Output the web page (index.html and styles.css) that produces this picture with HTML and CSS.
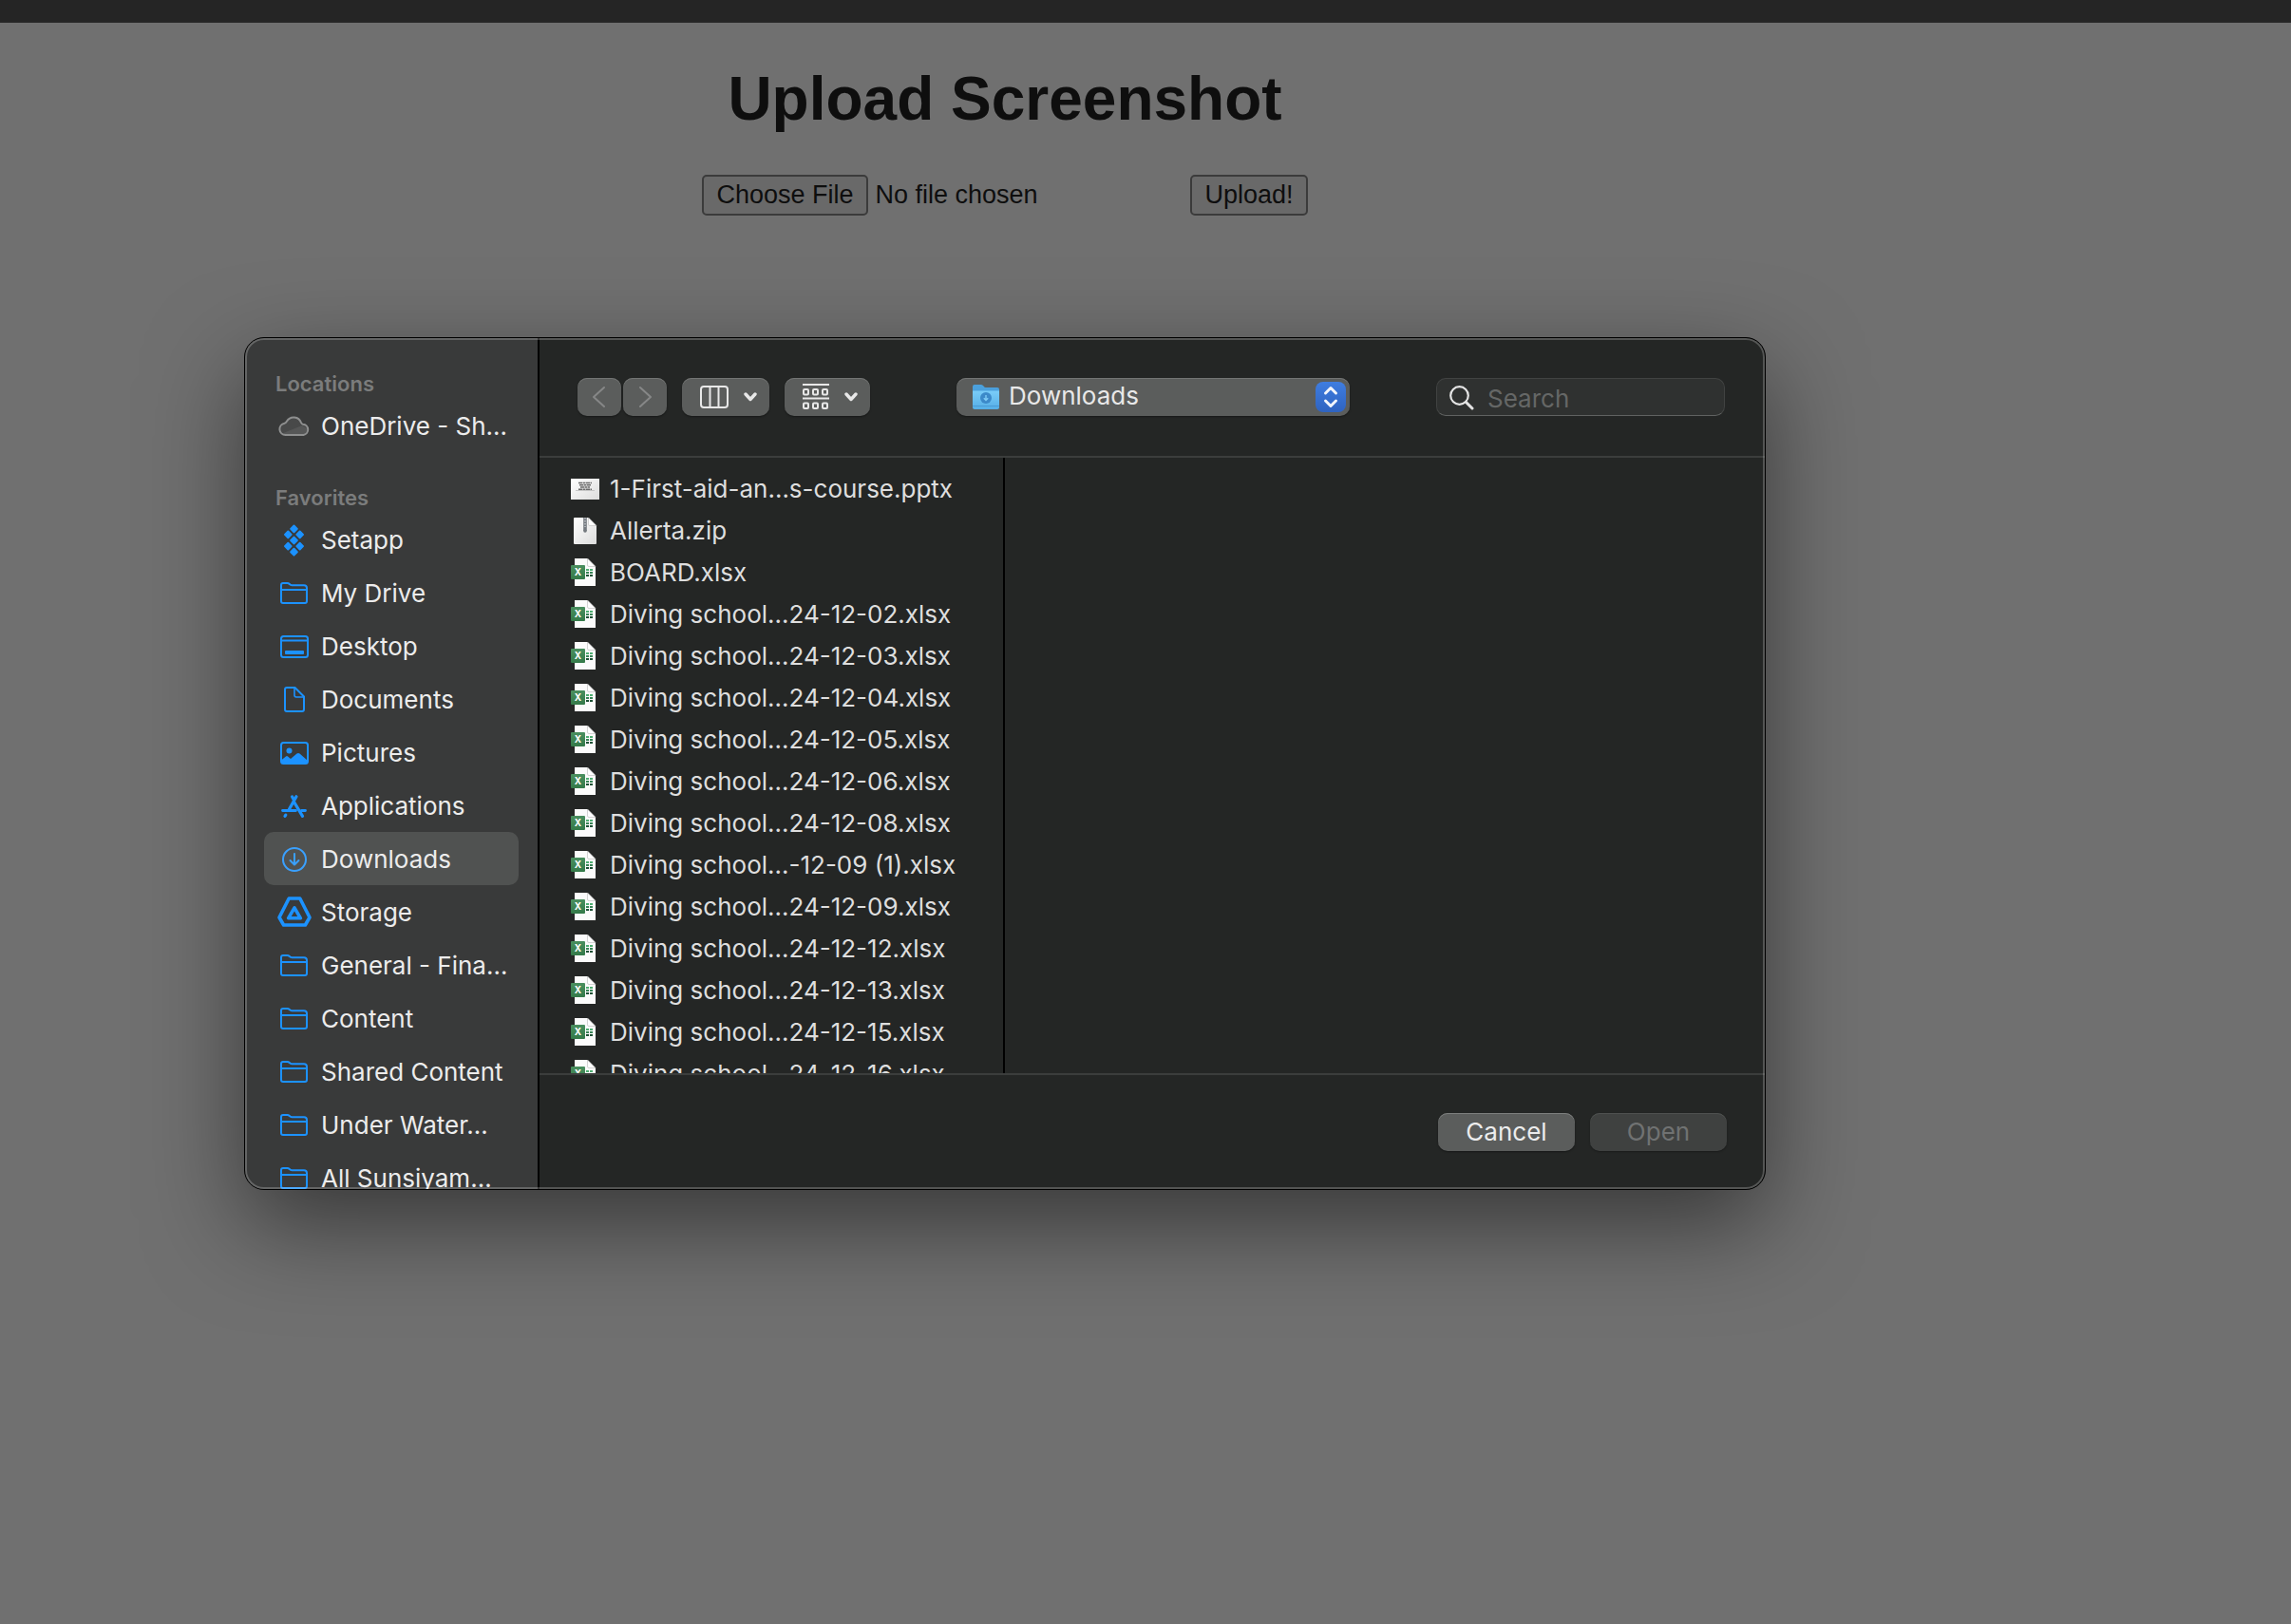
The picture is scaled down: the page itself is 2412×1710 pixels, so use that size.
FILE: index.html
```html
<!DOCTYPE html>
<html lang="en">
<head>
<meta charset="utf-8">
<title>Upload Screenshot</title>
<link rel="stylesheet" href="styles.css">
</head>
<body>
<svg class="sprite" aria-hidden="true">
  <defs>
    <linearGradient id="page-fill" x1="0" y1="0" x2="1" y2="1"><stop offset="0" stop-color="#fff"/><stop offset="1" stop-color="#dcdcdc"/></linearGradient>
    <linearGradient id="folder-fill" x1="0" y1="0" x2="0" y2="1"><stop offset="0" stop-color="#7accf8"/><stop offset="1" stop-color="#55aee6"/></linearGradient>
    <linearGradient id="excel-fill" x1="0" y1="0" x2="0" y2="1"><stop offset="0" stop-color="#4a8f5f"/><stop offset="1" stop-color="#347a49"/></linearGradient>
  </defs>
  <symbol id="folder" viewBox="0 0 36 36"><path d="M5 27V10a2 2 0 0 1 2-2h4.500c1 0 1.600.3 2.300 1 .8.800 1.400 1.200 2.500 1.200H29a3 3 0 0 1 3 3V27a2 2 0 0 1-2 2H7a2 2 0 0 1-2-2zM5 15h27" fill="none" stroke="currentColor" stroke-width="2"/></symbol>
  <symbol id="cloud" viewBox="0 0 36 36"><path d="M9.500 28a6.200 6.200 0 0 1-1-12.300c1.500-.3 1.700-.7 2.500-2.200a8.300 8.300 0 0 1 15 1.500c.4 1.200.8 1.500 2 1.700A5.700 5.700 0 0 1 28.500 28z" fill="#484949"/><path d="M5 27l22-9 7 4-4 6H9z" fill="#565757"/><path d="M9.500 28a6.200 6.200 0 0 1-1-12.300c1.500-.3 1.700-.7 2.500-2.200a8.300 8.300 0 0 1 15 1.500c.4 1.200.8 1.500 2 1.700A5.700 5.700 0 0 1 28.500 28z" fill="none" stroke="#8e8f8f" stroke-width="2"/></symbol>
  <symbol id="setapp" viewBox="0 0 36 36"><g fill="currentColor" stroke="currentColor" stroke-width="2" stroke-linejoin="round"><path d="M18.500 3.500l3.300 3.400-3.300 3.400-3.300-3.400zM12.300 9.500l3.300 3.400-3.300 3.400L9 12.900zM24.700 9.500l3.300 3.400-3.300 3.400-3.300-3.400zM18.500 15.600l3.300 3.400-3.300 3.400-3.300-3.400zM12.300 21.700l3.300 3.400-3.300 3.400L9 25.100zM24.700 21.700l3.300 3.400-3.300 3.400-3.300-3.400zM18.500 27.800l3.300 3.400-3.300 3.400-3.300-3.400z"/></g></symbol>
  <symbol id="desktop" viewBox="0 0 36 36"><rect x="5" y="8" width="28" height="22" rx="2.500" fill="none" stroke="currentColor" stroke-width="2"/><path d="M5 12.500h28" stroke="currentColor" stroke-width="2"/><rect x="9" y="23" width="20" height="4" rx="1" fill="currentColor"/></symbol>
  <symbol id="document" viewBox="0 0 36 36"><path d="M11 6h8.500L29 15.500V29a2 2 0 0 1-2 2H11a2 2 0 0 1-2-2V8a2 2 0 0 1 2-2z" fill="none" stroke="currentColor" stroke-width="2"/><path d="M19 6v8a2 2 0 0 0 2 2h8" fill="none" stroke="currentColor" stroke-width="1.600"/></symbol>
  <symbol id="picture" viewBox="0 0 36 36"><rect x="5" y="8" width="28" height="22" rx="2.500" fill="none" stroke="currentColor" stroke-width="2"/><circle cx="13.500" cy="16.500" r="3" fill="currentColor"/><path d="M5 26.500l5-4q1-.8 2 0l3 2.500 6.500-5.500q1.500-1.200 3 0L33 27v3H5z" fill="currentColor"/></symbol>
  <symbol id="apps" viewBox="0 0 36 36"><g fill="none" stroke="currentColor" stroke-width="3.200" stroke-linecap="round"><path d="M21 8.800L13.500 22M16.500 8.800l1.600 3M18.600 14.500L27.500 29.400M9 29.400l.8-1.200"/><path d="M6.500 23.500h14M26.500 23.500h4" stroke-width="2.800"/></g></symbol>
  <symbol id="download" viewBox="0 0 36 36"><g fill="none" stroke="currentColor" stroke-width="2" stroke-linecap="round" stroke-linejoin="round"><circle cx="19" cy="19" r="12"/><path d="M19 13v11M14.500 20l4.500 4.500 4.500-4.500"/></g></symbol>
  <symbol id="storage" viewBox="0 0 36 36"><g fill="none" stroke="currentColor" stroke-width="3.600" stroke-linejoin="round"><path d="M13.200 4h11.600L35 24l-4.600 8H7.600L3 24z"/><path d="M19 13.800l6.400 11H12.600z"/></g></symbol>
  <symbol id="chevron" viewBox="0 0 14 10"><path d="M2 2l5 5.500L12 2" fill="none" stroke="#e8e8e8" stroke-width="3.400" stroke-linecap="round" stroke-linejoin="round"/></symbol>
  <symbol id="zip" viewBox="0 0 32 32"><path d="M5 3h14l9 9v18q0 1-1 1H5q-1 0-1-1V4q0-1 1-1z" fill="url(#page-fill)"/><path d="M19.500 3L28 11.500h-7q-1.500 0-1.500-1.500z" fill="#fff" stroke="#bbb" stroke-width=".6"/><path d="M16 3v14" stroke="#74797f" stroke-width="3.600"/><path d="M16 3v10" stroke="#c4c8cc" stroke-width="1.400" stroke-dasharray="1.500 1.500"/><circle cx="16" cy="17" r="1.800" fill="#74797f"/></symbol>
  <symbol id="xlsx" viewBox="0 0 32 32"><path d="M5 2h13l9 9v20H5z" fill="#fbfbfb"/><path d="M18.500 2l8.500 8.500h-7q-1.500 0-1.500-1.500z" fill="#fff" stroke="#c2c2c2" stroke-width=".7"/><path d="M17 14h3M21 14h3" stroke="#4fae72" stroke-width="2"/><path d="M17 17h3M21 17h3" stroke="#378456" stroke-width="2"/><path d="M17 20h3M21 20h3" stroke="#1f5136" stroke-width="2"/><rect x="1" y="9" width="15" height="15" rx="1" fill="url(#excel-fill)"/><text x="8.500" y="20" font-family="Inter, sans-serif" font-size="10" font-weight="700" text-anchor="middle" fill="#fff">X</text></symbol>
</svg>

<header class="topbar"></header>
<main class="page">
  <h1 class="title">Upload Screenshot</h1>
  <form class="upload">
    <input class="upload-file" type="file" aria-label="Screenshot file">
    <button class="upload-submit" type="button">Upload!</button>
  </form>

  <section class="picker" role="dialog" aria-label="Choose a file">
    <nav class="sidebar" aria-label="Places">
      <h2 class="group">Locations</h2>
      <ul class="places">
        <li><a class="place" href="#"><svg><use href="#cloud"/></svg>OneDrive - Sh…</a></li>
      </ul>
      <h2 class="group">Favorites</h2>
      <ul class="places">
        <li><a class="place" href="#"><svg><use href="#setapp"/></svg>Setapp</a></li>
        <li><a class="place" href="#"><svg><use href="#folder"/></svg>My Drive</a></li>
        <li><a class="place" href="#"><svg><use href="#desktop"/></svg>Desktop</a></li>
        <li><a class="place" href="#"><svg><use href="#document"/></svg>Documents</a></li>
        <li><a class="place" href="#"><svg><use href="#picture"/></svg>Pictures</a></li>
        <li><a class="place" href="#"><svg><use href="#apps"/></svg>Applications</a></li>
        <li><a class="place current" href="#" aria-current="true"><svg><use href="#download"/></svg>Downloads</a></li>
        <li><a class="place" href="#"><svg><use class="wide" href="#storage"/></svg>Storage</a></li>
        <li><a class="place" href="#"><svg><use href="#folder"/></svg>General - Fina…</a></li>
        <li><a class="place" href="#"><svg><use href="#folder"/></svg>Content</a></li>
        <li><a class="place" href="#"><svg><use href="#folder"/></svg>Shared Content</a></li>
        <li><a class="place" href="#"><svg><use href="#folder"/></svg>Under Water…</a></li>
        <li><a class="place" href="#"><svg><use href="#folder"/></svg>All Sunsiyam…</a></li>
      </ul>
    </nav>

    <div class="browser">
      <div class="toolbar">
        <div class="tools">
          <div class="history">
            <button class="tool nav" type="button" aria-label="Back"><svg width="14" height="24" viewBox="0 0 14 24"><path d="M12 2L1 12l11 10" fill="none" stroke="currentColor" stroke-width="2" stroke-linecap="round" stroke-linejoin="round"/></svg></button>
            <button class="tool nav" type="button" aria-label="Forward"><svg width="14" height="24" viewBox="0 0 14 24"><path d="M2 2l11 10L2 22" fill="none" stroke="currentColor" stroke-width="2" stroke-linecap="round" stroke-linejoin="round"/></svg></button>
          </div>
          <button class="tool menu" type="button" aria-label="Column view"><svg width="30" height="24" viewBox="0 0 30 24"><rect x="1" y="1" width="28" height="22" rx="3" fill="none" stroke="#e8e8e8" stroke-width="2"/><path d="M10.500 1v22M19.500 1v22" stroke="#e8e8e8" stroke-width="2"/></svg><svg class="arrow"><use href="#chevron"/></svg></button>
          <button class="tool menu" type="button" aria-label="Group items"><svg width="28" height="28" viewBox="0 0 28 28"><g fill="none" stroke="#e8e8e8" stroke-width="2"><path d="M0 1h28M0 15.500h28"/><rect x="1" y="6" width="5" height="5.500" rx="1"/><rect x="11" y="6" width="5" height="5.500" rx="1"/><rect x="21" y="6" width="5" height="5.500" rx="1"/><rect x="1" y="20.500" width="5" height="5.500" rx="1"/><rect x="11" y="20.500" width="5" height="5.500" rx="1"/><rect x="21" y="20.500" width="5" height="5.500" rx="1"/></g></svg><svg class="arrow"><use href="#chevron"/></svg></button>
        </div>
        <div class="location">
          <select class="location-select" aria-label="Folder"><option>Downloads</option></select>
          <svg class="location-icon" viewBox="0 0 28 26"><path d="M0 2q0-2 2-2h7q1.500 0 2.500 1.500T14 3h12q2 0 2 2v19H0z" fill="#4ba0dc"/><path d="M0 6.500h28V24q0 2-2 2H2q-2 0-2-2z" fill="url(#folder-fill)"/><path d="M0 22.500h28" stroke="#489bd6"/><circle cx="14" cy="14" r="6" fill="#3c89c9"/><path d="M14 11v5M11.800 14.200L14 16.500l2.200-2.300" fill="none" stroke="#7fcbf6" stroke-width="1.400"/></svg>
          <svg class="location-stepper" viewBox="0 0 32 32"><path d="M10.500 12l5.500-5.500 5.500 5.500M10.500 20l5.500 5.500 5.500-5.500" fill="none" stroke="#f2f5fb" stroke-width="3" stroke-linecap="round" stroke-linejoin="round"/></svg>
        </div>
        <div class="search">
          <input class="search-input" type="text" placeholder="Search" aria-label="Search">
          <svg class="search-icon" viewBox="0 0 26 26"><circle cx="10.500" cy="10.500" r="9.300" fill="none" stroke="#e4e4e4" stroke-width="2.200"/><path d="M17.500 17.500l6.500 6.500" stroke="#e4e4e4" stroke-width="3" stroke-linecap="round"/></svg>
        </div>
      </div>

      <div class="columns">
        <ul class="files">
          <li><button class="file" type="button"><svg viewBox="0 0 32 32"><rect x="1" y="6" width="30" height="22" fill="url(#page-fill)"/><path d="M9 10.500h14M10 12.800h12M11 15h10M9 17.200h14" stroke="#6a6a6a" stroke-width="1.400" stroke-dasharray="4 .5 3 .5"/><path d="M6 18.500h20" stroke="#bbb" stroke-width=".8"/></svg>1-First-aid-an…s-course.pptx</button></li>
          <li><button class="file" type="button"><svg><use href="#zip"/></svg>Allerta.zip</button></li>
          <li><button class="file" type="button"><svg><use href="#xlsx"/></svg>BOARD.xlsx</button></li>
          <li><button class="file" type="button"><svg><use href="#xlsx"/></svg>Diving school…24-12-02.xlsx</button></li>
          <li><button class="file" type="button"><svg><use href="#xlsx"/></svg>Diving school…24-12-03.xlsx</button></li>
          <li><button class="file" type="button"><svg><use href="#xlsx"/></svg>Diving school…24-12-04.xlsx</button></li>
          <li><button class="file" type="button"><svg><use href="#xlsx"/></svg>Diving school…24-12-05.xlsx</button></li>
          <li><button class="file" type="button"><svg><use href="#xlsx"/></svg>Diving school…24-12-06.xlsx</button></li>
          <li><button class="file" type="button"><svg><use href="#xlsx"/></svg>Diving school…24-12-08.xlsx</button></li>
          <li><button class="file" type="button"><svg><use href="#xlsx"/></svg>Diving school…-12-09 (1).xlsx</button></li>
          <li><button class="file" type="button"><svg><use href="#xlsx"/></svg>Diving school…24-12-09.xlsx</button></li>
          <li><button class="file" type="button"><svg><use href="#xlsx"/></svg>Diving school…24-12-12.xlsx</button></li>
          <li><button class="file" type="button"><svg><use href="#xlsx"/></svg>Diving school…24-12-13.xlsx</button></li>
          <li><button class="file" type="button"><svg><use href="#xlsx"/></svg>Diving school…24-12-15.xlsx</button></li>
          <li><button class="file" type="button"><svg><use href="#xlsx"/></svg>Diving school…24-12-16.xlsx</button></li>
        </ul>
      </div>

      <div class="actions">
        <button class="action" type="button">Cancel</button>
        <button class="action" type="button" disabled>Open</button>
      </div>
    </div>
  </section>
</main>
</body>
</html>
```
FILE: styles.css
```css
* {
  box-sizing: border-box;
}

body {
  margin: 0;
  min-height: 100vh;
  background: #707070;
  color: #0e0e0e;
  font-family: "Liberation Sans", Arial, sans-serif;
}

.sprite {
  position: absolute;
  width: 0;
  height: 0;
}

.topbar {
  height: 24px;
  background: #252525;
  border-bottom: 1px solid #2b2b2b;
}

.page {
  display: flex;
  flex-direction: column;
  align-items: center;
  padding: 44px 296px 44px 0;
}

.title {
  margin: 0 0 44px;
  font-size: 64px;
  line-height: 72px;
}

.upload {
  display: flex;
  gap: 8px;
  margin-bottom: 128px;
}

.upload-file {
  width: 506px;
  color: #0e0e0e;
  font: 27px/31px "Liberation Sans", Arial, sans-serif;
}

.upload-file::file-selector-button,
.upload-submit {
  margin: 0;
  padding: 4px 13px;
  border: 2px solid #3b3b3b;
  border-radius: 5px;
  background: #696969;
  color: #0e0e0e;
  font: 27px/31px "Liberation Sans", Arial, sans-serif;
}

.upload-file::file-selector-button {
  margin-right: 8px;
}

/* File picker window */

.picker {
  position: relative;
  display: grid;
  grid-template-columns: 310px 1fr;
  width: 100%;
  max-width: 1602px;
  border: 1px solid #000;
  border-radius: 21px;
  overflow: hidden;
  background: #242625;
  color: #e2e2e2;
  font: 26px/32px Inter, sans-serif;
  box-shadow: 0 36px 100px rgba(0, 0, 0, 0.5);
}

.picker::after {
  content: "";
  position: absolute;
  inset: 0;
  border: 2px solid rgba(255, 255, 255, 0.22);
  border-radius: 20px;
  pointer-events: none;
}

.picker ul {
  margin: 0;
  padding: 0;
  list-style: none;
}

.picker button,
.picker input,
.picker select {
  margin: 0;
  font: inherit;
}

.sidebar {
  contain: size;
  overflow: hidden;
  padding: 32px 20px 0;
  border-right: 2px solid #000;
  background: #393a3a;
}

.group {
  margin: 0;
  padding-left: 12px;
  color: #7b7c7c;
  font-size: 22px;
  font-weight: 600;
  line-height: 32px;
}

.places + .group {
  margin-top: 32px;
}

.place {
  display: flex;
  align-items: center;
  gap: 11px;
  height: 56px;
  padding: 2px 0 0 13px;
  border-radius: 10px;
  color: #ececec;
  text-decoration: none;
  white-space: nowrap;
}

.place svg {
  flex: none;
  width: 36px;
  height: 36px;
  margin-top: -2px;
  overflow: visible;
  color: #1c92ff;
}

#storage {
  overflow: visible;
}

.place.current {
  background: #505251;
}

.place.current svg {
  color: #3aa0ff;
}

.browser {
  display: flex;
  flex-direction: column;
  min-width: 0;
}

.toolbar {
  display: flex;
  align-items: center;
  justify-content: space-between;
  height: 126px;
  padding: 0 42px 0 40px;
  border-bottom: 2px solid #3b3d3c;
}

.tools {
  display: flex;
  gap: 16px;
}

.history {
  display: flex;
  gap: 2px;
}

.tool {
  display: flex;
  align-items: center;
  justify-content: center;
  height: 40px;
  padding: 0;
  border: 0;
  border-radius: 10px;
  background: #5b5d5c;
  box-shadow: inset 0 1px #737574, 0 1px 2px rgba(0, 0, 0, 0.4);
}

.nav {
  width: 46px;
  color: #868787;
}

.menu {
  gap: 16px;
  padding: 0 13px 0 19px;
}

.arrow {
  width: 14px;
  height: 10px;
}

.location {
  position: relative;
  width: 414px;
}

.location-select {
  display: block;
  width: 100%;
  height: 40px;
  padding: 0 44px 2px 55px;
  border: 0;
  border-radius: 10px;
  appearance: none;
  background: #5b5d5c;
  color: #e8e8e8;
  box-shadow: inset 0 1px #737574, 0 1px 2px rgba(0, 0, 0, 0.4);
}

.location-icon,
.location-stepper,
.search-icon {
  position: absolute;
  pointer-events: none;
}

.location-icon {
  top: 7px;
  left: 17px;
  width: 28px;
  height: 26px;
}

.location-stepper {
  top: 4px;
  right: 4px;
  width: 32px;
  height: 32px;
  border-radius: 8px;
  background: linear-gradient(#3f7de0, #2f63c0);
}

.search {
  position: relative;
  width: 304px;
}

.search-input {
  display: block;
  width: 100%;
  height: 40px;
  padding: 2px 12px 0 53px;
  border: 1px solid #414342;
  border-bottom-color: #606261;
  border-radius: 10px;
  background: #2f3130;
  color: #e2e2e2;
}

.search-input::placeholder {
  color: #656766;
}

.search-icon {
  top: 8px;
  left: 14px;
  width: 26px;
  height: 26px;
}

.columns {
  display: flex;
  height: 648px;
}

.files {
  width: 490px;
  overflow: hidden;
  border-right: 2px solid #000;
}

.picker .files {
  padding: 10px 0 10px 32px;
}

.file {
  display: flex;
  align-items: center;
  gap: 10px;
  height: 44px;
  padding: 2px 0 0;
  border: 0;
  background: none;
  color: #dedede;
  white-space: nowrap;
}

.file svg {
  flex: none;
  width: 32px;
  height: 32px;
  margin-top: -2px;
}

.actions {
  display: flex;
  align-items: center;
  justify-content: flex-end;
  gap: 16px;
  height: 122px;
  padding-right: 40px;
  border-top: 2px solid #3b3d3c;
}

.action {
  width: 144px;
  height: 40px;
  padding: 0;
  border: 0;
  border-radius: 10px;
  background: #5b5d5c;
  color: #ececec;
  box-shadow: inset 0 1px #7d7f7e, 0 1px 2px rgba(0, 0, 0, 0.4);
}

.action:disabled {
  background: #3f4140;
  color: #707272;
  box-shadow: inset 0 1px #4f5150, 0 1px 2px rgba(0, 0, 0, 0.3);
}
```
